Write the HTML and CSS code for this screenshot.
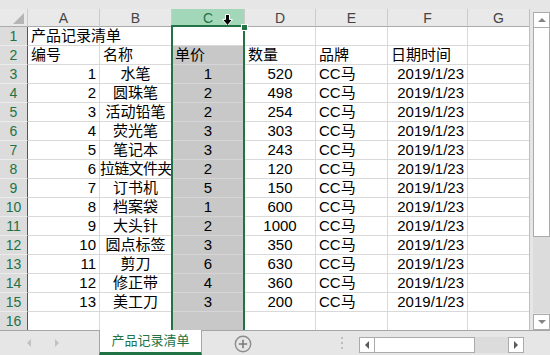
FILE: index.html
```html
<!DOCTYPE html>
<html lang="zh-CN">
<head>
    <meta charset="UTF-8">
    <title>产品记录清单</title>
    <link rel="stylesheet" href="styles.css">
</head>
<body>

<div class="excel">
    <div class="top-strip"></div>

    <div class="work">
        <div class="sheet">
            <div class="row head">
                <div class="corner"><span class="tri"></span></div>
                <div class="ch">A</div>
                <div class="ch">B</div>
                <div class="ch ch-sel">C
                    <svg class="cursor" width="11" height="12" viewBox="0 0 11 12">
                        <path d="M3.5 0.5 H7.5 V5.5 H10.5 L5.5 11.5 L0.5 5.5 H3.5 Z" fill="#000" stroke="#fff" stroke-width="1"/>
                    </svg>
                </div>
                <div class="ch">D</div>
                <div class="ch">E</div>
                <div class="ch">F</div>
                <div class="ch">G</div>
            </div>

            <div class="row"><div class="rh">1</div><div class="c">产品记录清单</div><div class="c"></div><div class="c active"></div><div class="c"></div><div class="c"></div><div class="c"></div><div class="c"></div></div>
            <div class="row"><div class="rh">2</div><div class="c">编号</div><div class="c">名称</div><div class="c sel">单价</div><div class="c">数量</div><div class="c">品牌</div><div class="c">日期时间</div><div class="c"></div></div>
            <div class="row"><div class="rh">3</div><div class="c r">1</div><div class="c m">水笔</div><div class="c sel m">1</div><div class="c m">520</div><div class="c">CC马</div><div class="c r">2019/1/23</div><div class="c"></div></div>
            <div class="row"><div class="rh">4</div><div class="c r">2</div><div class="c m">圆珠笔</div><div class="c sel m">2</div><div class="c m">498</div><div class="c">CC马</div><div class="c r">2019/1/23</div><div class="c"></div></div>
            <div class="row"><div class="rh">5</div><div class="c r">3</div><div class="c m">活动铅笔</div><div class="c sel m">2</div><div class="c m">254</div><div class="c">CC马</div><div class="c r">2019/1/23</div><div class="c"></div></div>
            <div class="row"><div class="rh">6</div><div class="c r">4</div><div class="c m">荧光笔</div><div class="c sel m">3</div><div class="c m">303</div><div class="c">CC马</div><div class="c r">2019/1/23</div><div class="c"></div></div>
            <div class="row"><div class="rh">7</div><div class="c r">5</div><div class="c m">笔记本</div><div class="c sel m">3</div><div class="c m">243</div><div class="c">CC马</div><div class="c r">2019/1/23</div><div class="c"></div></div>
            <div class="row"><div class="rh">8</div><div class="c r">6</div><div class="c m wide">拉链文件夹</div><div class="c sel m">2</div><div class="c m">120</div><div class="c">CC马</div><div class="c r">2019/1/23</div><div class="c"></div></div>
            <div class="row"><div class="rh">9</div><div class="c r">7</div><div class="c m">订书机</div><div class="c sel m">5</div><div class="c m">150</div><div class="c">CC马</div><div class="c r">2019/1/23</div><div class="c"></div></div>
            <div class="row"><div class="rh">10</div><div class="c r">8</div><div class="c m">档案袋</div><div class="c sel m">1</div><div class="c m">600</div><div class="c">CC马</div><div class="c r">2019/1/23</div><div class="c"></div></div>
            <div class="row"><div class="rh">11</div><div class="c r">9</div><div class="c m">大头针</div><div class="c sel m">2</div><div class="c m">1000</div><div class="c">CC马</div><div class="c r">2019/1/23</div><div class="c"></div></div>
            <div class="row"><div class="rh">12</div><div class="c r">10</div><div class="c m">圆点标签</div><div class="c sel m">3</div><div class="c m">350</div><div class="c">CC马</div><div class="c r">2019/1/23</div><div class="c"></div></div>
            <div class="row"><div class="rh">13</div><div class="c r">11</div><div class="c m">剪刀</div><div class="c sel m">6</div><div class="c m">630</div><div class="c">CC马</div><div class="c r">2019/1/23</div><div class="c"></div></div>
            <div class="row"><div class="rh">14</div><div class="c r">12</div><div class="c m">修正带</div><div class="c sel m">4</div><div class="c m">360</div><div class="c">CC马</div><div class="c r">2019/1/23</div><div class="c"></div></div>
            <div class="row"><div class="rh">15</div><div class="c r">13</div><div class="c m">美工刀</div><div class="c sel m">3</div><div class="c m">200</div><div class="c">CC马</div><div class="c r">2019/1/23</div><div class="c"></div></div>
            <div class="row"><div class="rh">16</div><div class="c"></div><div class="c"></div><div class="c sel"></div><div class="c"></div><div class="c"></div><div class="c"></div><div class="c"></div></div>

            <!-- selected column C -->
            <div class="selection"><span class="handle"></span></div>
        </div>

        <div class="vscroll">
            <div class="sb-btn"><span class="arr-up"></span></div>
            <div class="vthumb"></div>
            <div class="vtrack"></div>
            <div class="sb-btn"><span class="arr-down"></span></div>
        </div>
    </div>

    <div class="tabbar">
        <div class="tab-nav">
            <span class="nav-left"></span>
            <span class="nav-right"></span>
        </div>
        <div class="tab">产品记录清单</div>
        <div class="add-sheet">
            <svg width="18" height="18" viewBox="0 0 18 18">
                <circle cx="9" cy="9" r="7.7" fill="none" stroke="#8c8c8c" stroke-width="1.4"/>
                <path d="M9 4.8 V13.2 M4.8 9 H13.2" stroke="#7a7a7a" stroke-width="1.6"/>
            </svg>
        </div>
        <div class="dots"><i></i><i></i><i></i></div>
        <div class="hscroll">
            <div class="hb"><span class="arr-left"></span></div>
            <div class="hthumb"></div>
            <div class="htrack"></div>
            <div class="hb"><span class="arr-right"></span></div>
        </div>
    </div>
</div>

</body>
</html>
```

FILE: styles.css
```css
body {
    margin: 0;
    width: 550px;
    height: 355px;
    overflow: hidden;
    background-color: #e6e6e6;
    font-family: "Liberation Sans", "Noto Sans CJK SC", sans-serif;
    color: #000;
}

.excel {
    display: flex;
    flex-direction: column;
    height: 355px;
}

.top-strip {
    height: 9px;
    background-color: #e6e6e6;
}

.work {
    display: flex;
    gap: 3px;
    height: 321px;
    overflow: hidden;
}

.sheet {
    position: relative;
    width: 531px;
    background-color: #fff;
    border-right: 1px solid #bfbfbf;
    box-sizing: border-box;
    overflow: hidden;
}

.row {
    display: grid;
    grid-template-columns: 28px 72px 72px 73px 71px 72px 80px 62px;
    height: 19px;
}

.row.head {
    height: 18px;
    background-color: #e9e9e9;
}

.corner {
    position: relative;
    border-right: 1px solid #cbcbcb;
    border-bottom: 1px solid #ababab;
}

.corner .tri {
    position: absolute;
    right: 3px;
    bottom: 2px;
    width: 0;
    height: 0;
    border-left: 11px solid transparent;
    border-bottom: 11px solid #b5b5b5;
}

.ch {
    position: relative;
    display: flex;
    justify-content: center;
    align-items: center;
    font-size: 14px;
    color: #444;
    border-right: 1px solid #cbcbcb;
    border-bottom: 1px solid #ababab;
    box-sizing: border-box;
}

.ch-sel {
    background-color: #a3d7b9;
    color: #217346;
}

.cursor {
    position: absolute;
    left: 50px;
    top: 5px;
}

.rh {
    display: flex;
    justify-content: center;
    align-items: flex-end;
    font-size: 14px;
    line-height: 18px;
    color: #217346;
    background-color: #dcdcdc;
    border-right: 1px solid #217346;
    border-bottom: 1px solid #ececec;
    box-sizing: border-box;
}

.c {
    font-size: 15px;
    line-height: 18px;
    padding: 0 3px;
    white-space: nowrap;
    border-right: 1px solid #d9d9d9;
    border-bottom: 1px solid #d9d9d9;
    box-sizing: border-box;
}

.c.r {
    text-align: right;
}

.c.m {
    text-align: center;
}

.c.wide {
    padding: 0;
    letter-spacing: -0.7px;
}

.c.sel {
    background-color: #c8c8c8;
    border-bottom-color: #d6d6d6;
}

.selection {
    position: absolute;
    left: 171px;
    top: 16px;
    width: 74px;
    bottom: -4px;
    border: 2px solid #217346;
    box-sizing: border-box;
    pointer-events: none;
}

.handle {
    position: absolute;
    top: -3px;
    right: -5px;
    width: 5px;
    height: 5px;
    background-color: #217346;
    border: 1px solid #fff;
}

/* vertical scrollbar */
.vscroll {
    display: flex;
    flex-direction: column;
    width: 17px;
    padding-top: 3px;
    box-sizing: border-box;
}

.sb-btn {
    height: 14px;
    background-color: #fff;
    border: 1px solid #ababab;
    display: flex;
    justify-content: center;
    align-items: center;
}

.vthumb {
    height: 208px;
    background-color: #fff;
    border: 1px solid #ababab;
    border-top: none;
}

.vtrack {
    flex: 1;
    background-color: #dcdcdc;
    margin-bottom: 1px;
}

.arr-up {
    border-left: 4px solid transparent;
    border-right: 4px solid transparent;
    border-bottom: 4px solid #858585;
}

.arr-down {
    border-left: 4px solid transparent;
    border-right: 4px solid transparent;
    border-top: 4px solid #858585;
}

/* sheet tabs */
.tabbar {
    display: flex;
    align-items: stretch;
    height: 25px;
    border-top: 1px solid #a6a6a6;
    box-sizing: border-box;
    background-color: #e6e6e6;
}

.tab-nav {
    display: flex;
    align-items: center;
    gap: 24px;
    width: 99px;
    padding-left: 27px;
    box-sizing: border-box;
}

.nav-left {
    border-top: 4px solid transparent;
    border-bottom: 4px solid transparent;
    border-right: 4px solid #c2c2c2;
}

.nav-right {
    border-top: 4px solid transparent;
    border-bottom: 4px solid transparent;
    border-left: 4px solid #c2c2c2;
}

.tab {
    width: 103px;
    height: 25px;
    margin-top: -1px;
    background-color: #fff;
    color: #217346;
    font-size: 13px;
    text-align: center;
    line-height: 21px;
    border-left: 1px solid #a6a6a6;
    border-right: 1px solid #a6a6a6;
    border-bottom: 3px solid #217346;
    box-sizing: border-box;
}

.add-sheet {
    display: flex;
    align-items: center;
    margin-left: 32px;
    padding-top: 1px;
}

.dots {
    display: flex;
    flex-direction: column;
    justify-content: center;
    gap: 3px;
    margin-left: 89px;
}

.dots i {
    display: block;
    width: 2px;
    height: 2px;
    background-color: #bdbdbd;
}

.hscroll {
    display: flex;
    margin-left: 16px;
    margin-top: 6px;
    height: 16px;
    width: 165px;
}

.hb {
    width: 14px;
    background-color: #fff;
    border: 1px solid #ababab;
    display: flex;
    justify-content: center;
    align-items: center;
}

.hthumb {
    width: 100px;
    background-color: #fff;
    border-top: 1px solid #ababab;
    border-bottom: 1px solid #ababab;
    border-right: 1px solid #ababab;
    box-sizing: border-box;
}

.htrack {
    flex: 1;
    background-color: #dcdcdc;
}

.arr-left {
    border-top: 4px solid transparent;
    border-bottom: 4px solid transparent;
    border-right: 4px solid #5a5a5a;
}

.arr-right {
    border-top: 4px solid transparent;
    border-bottom: 4px solid transparent;
    border-left: 4px solid #5a5a5a;
}
```
